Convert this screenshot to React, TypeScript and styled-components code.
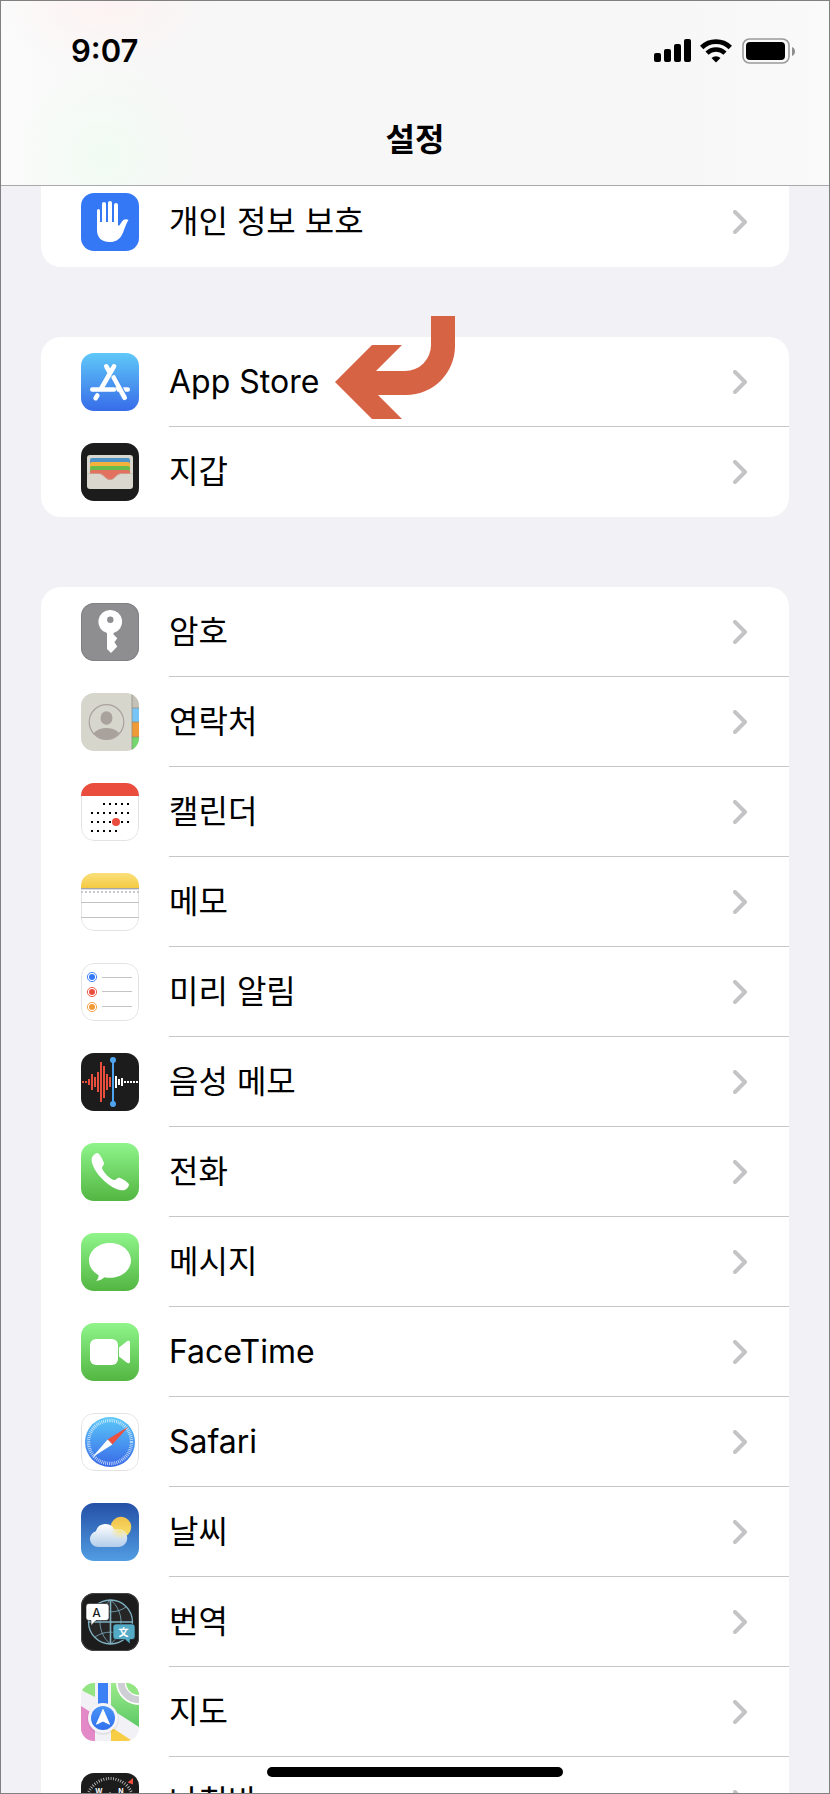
import React from 'react';
import styled, { createGlobalStyle } from 'styled-components';

const GlobalStyle = createGlobalStyle`
  *, *::before, *::after { box-sizing: border-box; }
  body { margin: 0; background: #f1f1f6; }
`;

const Screen = styled.div`
  position: relative;
  display: flex;
  flex-direction: column;
  height: 100vh;
  overflow: hidden;
  border: 1px solid #808080;
  background: #f1f1f6;
  color: #000;
  font-family: Inter, 'Noto Sans CJK KR', sans-serif;
`;

const Header = styled.header`
  position: relative;
  z-index: 1;
  flex: none;
  border-bottom: 1px solid #a9a9ac;
  background:
    radial-gradient(ellipse 110px 70px at 105px 0, rgba(255, 241, 239, 0.7), rgba(255, 241, 239, 0)),
    radial-gradient(ellipse 100px 100px at 105px 155px, rgba(241, 252, 242, 0.9), rgba(241, 252, 242, 0)),
    linear-gradient(90deg, #fbfbfb 0, #f7f7f7 160px, #f7f7f7 80%, #fafafa 100%);
`;

const StatusBar = styled.div`
  display: flex;
  align-items: center;
  justify-content: space-between;
  height: 100px;
  padding: 0 34px 0 70px;
`;

const Time = styled.time`
  font-size: 31px;
  line-height: 40px;
  font-weight: 600;
`;

const StatusIcons = styled.div`
  display: flex;
  align-items: center;
  gap: 9px;
`;

const Title = styled.h1`
  margin: 0;
  padding: 15px 0 21px;
  font-size: 32px;
  line-height: 48px;
  font-weight: 700;
  text-align: center;
`;

const List = styled.main`
  display: flex;
  flex: 1;
  flex-direction: column;
  gap: 70px;
  min-height: 0;
  margin-top: -9px;
  padding: 0 40px;
  overflow-y: auto;
  scrollbar-width: none;
`;

const Group = styled.ul`
  flex: none;
  margin: 0;
  padding: 0;
  border-radius: 20px;
  background: #fff;
  list-style: none;

  &:first-child {
    border-radius: 0 0 20px 20px;
  }
`;

const Item = styled.li`
  position: relative;
`;

const Row = styled.a`
  display: flex;
  gap: 30px;
  height: 90px;
  padding-left: 40px;
  color: inherit;
  text-decoration: none;
`;

const AppIcon = styled.svg`
  flex: none;
  align-self: center;
  width: 58px;
  height: 58px;
  border-radius: 13px;
`;

const Body = styled.span<{ $divided: boolean }>`
  display: flex;
  flex: 1;
  align-items: center;
  justify-content: space-between;
  padding-right: 42px;
  border-bottom: 1px solid ${(p) => (p.$divided ? '#c6c6c8' : 'transparent')};
`;

const Label = styled.span`
  font-size: 32px;
  line-height: 48px;
  white-space: nowrap;
`;

const Pointer = styled.svg`
  position: absolute;
  top: -22px;
  left: 294px;
`;

const HomeIndicator = styled.div`
  position: absolute;
  bottom: 16px;
  left: 50%;
  z-index: 1;
  width: 296px;
  height: 10px;
  border-radius: 5px;
  background: #000;
  transform: translateX(-50%);
`;

const Chevron = () => (
  <svg width="14" height="24" viewBox="0 0 14 24" fill="none" stroke="#c4c4c6" strokeWidth="4" strokeLinecap="round" strokeLinejoin="round" aria-hidden="true">
    <path d="M2 2 12 12 2 22" />
  </svg>
);

const DARK = '#1c1c1c';

const Gradient = ({ id, from, to }: { id: string; from: string; to: string }) => (
  <defs>
    <linearGradient id={id} x1="0" y1="0" x2="0" y2="1">
      <stop offset="0" stopColor={from} />
      <stop offset="1" stopColor={to} />
    </linearGradient>
  </defs>
);

const Fill = ({ color }: { color: string }) => <rect width="58" height="58" fill={color} />;

const Outline = ({ color }: { color: string }) => (
  <rect x=".5" y=".5" width="57" height="57" rx="12.5" fill="none" stroke={color} />
);

const Privacy = (
  <>
    <Fill color="#3578f6" />
    <path
      fill="#fff"
      d="M16 17.500a1.500 1.500 0 0 1 3 0V29h2V11a2 2 0 0 1 4 0V29h2V10a2 2 0 0 1 4 0V29h2V12a2 2 0 0 1 4 0V32c.6 1.200 1.500.5 2-.5l2-3c1.500-2 4-3 6.500-1.600-2 3-3 6-4.500 10C40.500 45 36 49 28.500 49 20 49 16 44 16 37Z"
    />
  </>
);

const AppStore = (
  <>
    <Gradient id="store" from="#5fc8f8" to="#376ce9" />
    <Fill color="url(#store)" />
    <g stroke="#fff" strokeWidth="4.600" strokeLinecap="round">
      <path d="M33 13.300 20.500 35M16.300 42.500 14.600 45.200M25.300 13.300 28.500 19M43 36.500H46.700" />
      <path d="M11.300 36.500H33" />
    </g>
    <path d="M33 25 43.500 44.800" stroke="#4b8ff0" strokeWidth="7" />
    <path d="M32.700 24.500 43.700 44.800" stroke="#fff" strokeWidth="4.600" strokeLinecap="round" />
    <path d="M34 34.200h4l2.400 4.600h-4z" fill="#fff" />
  </>
);

const Wallet = (
  <>
    <Fill color={DARK} />
    <rect x="6" y="12" width="46" height="34" rx="3" fill="#dad8ce" />
    <path d="M9 31V17a2 2 0 0 1 2-2H47a2 2 0 0 1 2 2V31Z" fill="#4e94c8" />
    <path d="M9 31V21a2 2 0 0 1 2-2H47a2 2 0 0 1 2 2V31Z" fill="#f4b13c" />
    <path d="M9 31V25a2 2 0 0 1 2-2H47a2 2 0 0 1 2 2V31Z" fill="#69bb4b" />
    <path d="M9 31V29a2 2 0 0 1 2-2H47a2 2 0 0 1 2 2V31H40c-5 0-6 6-11 6s-6-6-11-6Z" fill="#e2725f" />
    <path d="M6 30.500H18c5 0 6 6 11 6s6-6 11-6H52" fill="none" stroke="#bdb5aa" strokeWidth=".6" />
  </>
);

const Passwords = (
  <>
    <Fill color="#8e8e91" />
    <Outline color="#818184" />
    <path d="M29.300 7a11.700 11.700 0 0 1 3.200 23v1.500L36.300 35.300 33.400 39.300 36.300 43.600 30 50 26 46V30A11.700 11.700 0 0 1 29.300 7Z" fill="#fff" />
    <circle cx="29.300" cy="16.800" r="3.200" fill="#8e8e91" />
  </>
);

const Contacts = (
  <>
    <clipPath id="portrait">
      <circle cx="25.500" cy="29" r="17" />
    </clipPath>
    <Fill color="#d6d6cd" />
    <path d="M51 0h7v15h-7z" fill="#c4c2b8" />
    <path d="M51 15h7v14h-7z" fill="#77c4f6" />
    <path d="M51 29h7v15h-7z" fill="#f09a37" />
    <path d="M51 44h7v14h-7z" fill="#75d66e" />
    <path d="M51 0V58M51 15h7M51 29h7M51 44h7" stroke="#8a8778" strokeWidth=".7" />
    <g fill="#a9a19c">
      <ellipse cx="25.500" cy="25" rx="6" ry="6.800" />
      <ellipse cx="25.500" cy="46" rx="15" ry="11" clipPath="url(#portrait)" />
    </g>
    <circle cx="25.500" cy="29" r="17.300" fill="none" stroke="#a9a19c" strokeWidth="1.200" />
  </>
);

const calendarDots: [number, number, number][] = [
  [21, 23, 47],
  [30, 11, 47],
  [39, 11, 47],
  [48, 11, 35],
];

const Calendar = (
  <>
    <Fill color="#fff" />
    <Outline color="#e3e3e5" />
    <path d="M0 0H58V13H0Z" fill="#ea4d3d" />
    {calendarDots.map(([y, from, to]) => (
      <path key={y} d={`M${from - 1} ${y}H${to + 1}`} stroke="#000" strokeWidth="2" strokeDasharray="2 4" />
    ))}
    <circle cx="35" cy="39" r="4" fill="#ea4d3d" />
  </>
);

const Notes = (
  <>
    <Gradient id="notes" from="#fae07c" to="#f5ca42" />
    <Fill color="#fff" />
    <Outline color="#e3e3e5" />
    <path d="M0 0H58V15H0Z" fill="url(#notes)" />
    <path d="M0 15.500H58" stroke="#a5a5a8" />
    <path d="M0 16.500H58" stroke="#dcdcde" />
    <path d="M0 19H58" stroke="#c9c9cb" strokeWidth="2" strokeDasharray="2 2" />
    <path d="M0 29.500H58M0 44.500H58" stroke="#c2c2c4" />
  </>
);

const reminders: [number, number, string][] = [
  [14, 14.5, '#3478f6'],
  [29, 28.5, '#eb4e3d'],
  [44, 43.5, '#f19a37'],
];

const Reminders = (
  <>
    <Fill color="#fff" />
    <Outline color="#e3e3e5" />
    {reminders.map(([y, line, color]) => (
      <g key={y}>
        <circle cx="11" cy={y} r="4.600" fill="none" stroke={color} strokeWidth=".9" />
        <circle cx="11" cy={y} r="3" fill={color} />
        <path d={`M21 ${line}H51`} stroke="#c4c4c6" />
      </g>
    ))}
  </>
);

const redBars = [2, 2, 6, 16, 10, 20, 40, 32, 16, 10];
const whiteBars = [12, 6, 8, 2, 2, 2, 2, 2];

const VoiceMemos = (
  <>
    <Fill color={DARK} />
    {redBars.map((h, i) => (
      <rect key={i} x={1 + i * 3} y={29 - h / 2} width="2" height={h} fill="#e94e3d" />
    ))}
    {whiteBars.map((h, i) => (
      <rect key={i} x={34 + i * 3} y={29 - h / 2} width="2" height={h} fill="#fff" />
    ))}
    <g fill="#4fa4ee">
      <rect x="31" y="7" width="2" height="44" />
      <circle cx="32" cy="7" r="3" />
      <circle cx="32" cy="51" r="3" />
    </g>
  </>
);

const GREEN = { from: '#8ff58b', to: '#53b642' };

const Phone = (
  <>
    <Gradient id="phone" {...GREEN} />
    <Fill color="url(#phone)" />
    <path
      fill="#fff"
      d="M17 10.200C15.500 9.600 10.600 12.500 10.600 17 11.500 29 29 46.500 41 47.300 45.500 47.500 48 43.500 48 41.500 47.500 39.500 41 35.500 38.500 34.800 36.500 34.400 35.500 37 33 37 29.500 36.500 21.500 28.500 21 25 21 23 23.300 21.800 23 20 22 16.500 18.500 10.800 17 10.200Z"
    />
  </>
);

const Messages = (
  <>
    <Gradient id="messages" {...GREEN} />
    <Fill color="url(#messages)" />
    <path
      fill="#fff"
      d="M29 10C40.600 10 50 17.800 50 27.400S40.600 44.800 29 44.800C27 44.800 25.200 44.600 23.500 44.200 21.500 46 18.500 47.800 15 47.800 16.800 46.200 17.600 44.600 17.600 42.200 11.800 39 8 33.600 8 27.400 8 17.800 17.400 10 29 10Z"
    />
  </>
);

const FaceTime = (
  <>
    <Gradient id="facetime" {...GREEN} />
    <Fill color="url(#facetime)" />
    <rect x="9" y="16" width="28" height="26" rx="6" fill="#fff" />
    <path d="M38 24.500 46 18.200C47.500 17.200 49 17.800 49 19.500V38.500C49 40.200 47.500 40.800 46 39.800L38 33.500Z" fill="#fff" />
  </>
);

const Safari = (
  <>
    <Gradient id="safari" from="#5bc8f8" to="#3869e8" />
    <Fill color="#fff" />
    <Outline color="#e3e3e5" />
    <circle cx="29" cy="29" r="25" fill="url(#safari)" />
    <circle cx="29" cy="29" r="21.500" fill="none" stroke="#fff" strokeOpacity=".75" strokeWidth="3.400" strokeDasharray=".8 1.076" />
    <path d="M47.300 13.700 31.400 31.400 26.600 26.600Z" fill="#ec5040" />
    <path d="M11 44.600 26.600 26.600 31.400 31.400Z" fill="#fff" />
  </>
);

const Weather = (
  <>
    <Gradient id="sky" from="#2450a6" to="#519de3" />
    <defs>
      <linearGradient id="sun" x1="0" y1="0" x2="0" y2="1">
        <stop offset="0" stopColor="#f2c14c" />
        <stop offset="1" stopColor="#f7e36b" />
      </linearGradient>
      <linearGradient id="cloud" x1="0" y1="0" x2="0" y2="1">
        <stop offset="0" stopColor="#fff" />
        <stop offset="1" stopColor="#b3cdea" />
      </linearGradient>
      <radialGradient id="glow" gradientUnits="userSpaceOnUse" cx="39" cy="27" r="10">
        <stop offset="0" stopColor="#f8e37c" stopOpacity=".95" />
        <stop offset="1" stopColor="#f8e99c" stopOpacity="0" />
      </radialGradient>
    </defs>
    <Fill color="url(#sky)" />
    <circle cx="40" cy="24" r="10.200" fill="url(#sun)" />
    {['url(#cloud)', 'url(#glow)'].map((fill) => (
      <path key={fill} fill={fill} d="M17 44A8 8 0 0 1 14.800 28.300 10 10 0 0 1 33.500 26.800 9 9 0 1 1 37 44Z" />
    ))}
  </>
);

const Translate = (
  <>
    <Fill color={DARK} />
    <Outline color="#444" />
    <g fill="none" stroke="#7fb1c2" strokeWidth="1.300">
      <circle cx="29.500" cy="29" r="22" fill="#262626" />
      <path d="M29.500 7V51M7.500 29H51.500" strokeWidth="1.600" />
      <path d="M29.500 7C15.500 18 15.500 40 29.500 51M29.500 7C43.500 18 43.500 40 29.500 51M14 14C23 20.500 36 20.500 45 14M14 44C23 37.500 36 37.500 45 44" strokeWidth=".8" />
    </g>
    <path d="M8 10.500H25a3 3 0 0 1 3 3V24.500a3 3 0 0 1-3 3H15L10 32.500V27.500H8a3 3 0 0 1-3-3V13.500a3 3 0 0 1 3-3Z" fill="#fff" stroke={DARK} strokeWidth=".6" />
    <path d="M35 31H51a3 3 0 0 1 3 3V43.500a3 3 0 0 1-3 3H49V51L44 46.500H35a3 3 0 0 1-3-3V34a3 3 0 0 1 3-3Z" fill="#54abc6" stroke={DARK} strokeWidth=".6" />
    <text x="15.500" y="23.500" fontSize="12" fontWeight="500" textAnchor="middle" fill={DARK}>A</text>
    <text x="42.500" y="42.500" fontSize="10" fontWeight="700" textAnchor="middle" fill="#fff">文</text>
  </>
);

const Maps = (
  <>
    <Gradient id="park" from="#9dea8b" to="#5cc965" />
    <Gradient id="road" from="#4a94f7" to="#3170ee" />
    <Fill color="#f1f1f6" />
    <path d="M0 0H14V14L0 7Z" fill="#93e583" />
    <path d="M30 0H58V44L30 26Z" fill="url(#park)" />
    <path d="M0 23 14 32V58H0Z" fill="#e389c8" />
    <path d="M30 44 51.500 58H30Z" fill="#f7cd45" />
    <circle cx="58" cy="-1" r="18" fill="#93e583" stroke="#fff" strokeWidth="10" />
    <circle cx="58" cy="-1" r="17.800" fill="none" stroke="#cecfd4" strokeWidth="7" />
    <path d="M14 0H30V26H14Z" fill="#f1f1f6" />
    <path d="M17 0H27V24H17Z" fill="#3b80f5" />
    <circle cx="22" cy="36" r="16" fill="#000" fillOpacity=".06" />
    <circle cx="22" cy="35" r="15" fill="#f5f5f9" />
    <circle cx="22" cy="35" r="12" fill="url(#road)" />
    <path d="M22 26.500 28.500 41.200 22 38 15.500 41.200Z" fill="#fff" stroke="#fff" strokeLinejoin="round" />
  </>
);

const Compass = (
  <>
    <Fill color={DARK} />
    <circle cx="29" cy="29" r="23.500" fill="none" stroke="#cfcfcf" strokeWidth="3" strokeDasharray=".8 1.661" />
    <path d="M46.500 9.500 52 5V11.500Z" fill="#eb4e3d" />
    <g fontSize="7" fontWeight="700" fill="#fff" textAnchor="middle">
      <text x="18" y="21">W</text>
      <text x="40" y="21">N</text>
      <text x="18" y="42">S</text>
      <text x="40" y="42">E</text>
    </g>
    <path d="M29 19V39M19 29H39" stroke="#fff" strokeWidth=".8" />
  </>
);

type Entry = {
  label: string;
  icon: React.ReactNode;
  pointed?: boolean;
};

const groups: Entry[][] = [
  [{ label: '개인 정보 보호', icon: Privacy }],
  [
    { label: 'App Store', icon: AppStore, pointed: true },
    { label: '지갑', icon: Wallet },
  ],
  [
    { label: '암호', icon: Passwords },
    { label: '연락처', icon: Contacts },
    { label: '캘린더', icon: Calendar },
    { label: '메모', icon: Notes },
    { label: '미리 알림', icon: Reminders },
    { label: '음성 메모', icon: VoiceMemos },
    { label: '전화', icon: Phone },
    { label: '메시지', icon: Messages },
    { label: 'FaceTime', icon: FaceTime },
    { label: 'Safari', icon: Safari },
    { label: '날씨', icon: Weather },
    { label: '번역', icon: Translate },
    { label: '지도', icon: Maps },
    { label: '나침반', icon: Compass },
  ],
];

export default function App() {
  return (
    <>
      <GlobalStyle />
      <Screen>
        <Header>
          <StatusBar>
            <Time>9:07</Time>
            <StatusIcons>
              <svg width="37" height="24" viewBox="0 0 37 24" aria-hidden="true">
                <rect x="0" y="14" width="7" height="9" rx="2" />
                <rect x="10" y="10" width="7" height="13" rx="2" />
                <rect x="20" y="5" width="7" height="18" rx="2" />
                <rect x="30" y="0" width="7" height="23" rx="2" />
              </svg>
              <svg width="32" height="24" viewBox="0 0 32 24" fill="none" stroke="#000" aria-hidden="true">
                <path d="M1.700 8.500A20.500 20.500 0 0 1 30.300 8.500" strokeWidth="4.800" />
                <path d="M7 14.200A13 13 0 0 1 25 14.200" strokeWidth="4.500" />
                <path d="M11.500 19A6.500 6.500 0 0 1 20.500 19L16 23.500Z" fill="#000" stroke="none" />
              </svg>
              <svg width="54" height="26" viewBox="0 0 54 26" aria-hidden="true">
                <rect x="2" y="1" width="46" height="24" rx="6.500" fill="none" stroke="#9b9b9b" strokeWidth="1.600" />
                <rect x="5" y="4" width="39" height="18" rx="4" />
                <path d="M51 9c4 1.500 4 7.500 0 9z" fill="#8e8e8e" />
              </svg>
            </StatusIcons>
          </StatusBar>
          <Title>설정</Title>
        </Header>
        <List>
          {groups.map((entries) => (
            <Group key={entries[0].label}>
              {entries.map(({ label, icon, pointed }, i) => (
                <Item key={label}>
                  <Row href="#">
                    <AppIcon viewBox="0 0 58 58" aria-hidden="true">
                      {icon}
                    </AppIcon>
                    <Body $divided={i < entries.length - 1}>
                      <Label>{label}</Label>
                      <Chevron />
                    </Body>
                  </Row>
                  {pointed && (
                    <Pointer width="120" height="104" viewBox="0 0 120 104" aria-hidden="true">
                      <path
                        fill="#d76345"
                        d="M0 67 37 30H67L41 56H70A26 26 0 0 0 96 30V1H120V31A49 49 0 0 1 71 80H43L67 104H37Z"
                      />
                    </Pointer>
                  )}
                </Item>
              ))}
            </Group>
          ))}
        </List>
        <HomeIndicator />
      </Screen>
    </>
  );
}
